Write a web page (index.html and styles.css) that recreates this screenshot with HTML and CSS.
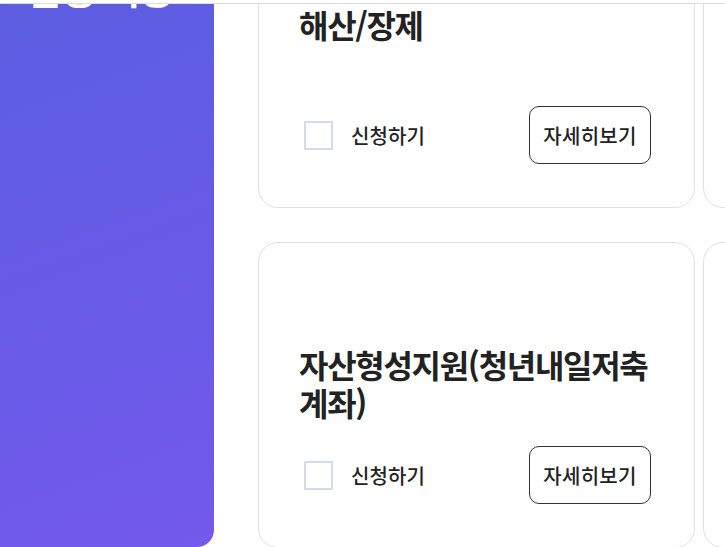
FILE: index.html
```html
<!DOCTYPE html>
<html lang="ko">
<head>
<meta charset="utf-8">
<link rel="stylesheet" href="styles.css">
</head>
<body>
<header class="topbar"></header>
<main class="page">
  <aside class="side">
    <h2 class="side-title">맞춤 복지<br>금융 이용</h2>
  </aside>
  <section class="grid">
    <article class="card">
      <h3 class="card-title">해산/장제</h3>
      <div class="card-foot">
        <label class="apply"><span class="box"></span><span class="apply-text">신청하기</span></label>
        <button class="more">자세히보기</button>
      </div>
    </article>
    <article class="card">
      <h3 class="card-title">주거급여</h3>
      <div class="card-foot">
        <label class="apply"><span class="box"></span><span class="apply-text">신청하기</span></label>
        <button class="more">자세히보기</button>
      </div>
    </article>
    <article class="card">
      <h3 class="card-title">자산형성지원(청년내일저축계좌)</h3>
      <div class="card-foot">
        <label class="apply"><span class="box"></span><span class="apply-text">신청하기</span></label>
        <button class="more">자세히보기</button>
      </div>
    </article>
    <article class="card">
      <h3 class="card-title">교육급여</h3>
      <div class="card-foot">
        <label class="apply"><span class="box"></span><span class="apply-text">신청하기</span></label>
        <button class="more">자세히보기</button>
      </div>
    </article>
  </section>
</main>
</body>
</html>
```
FILE: styles.css
```css
html, body {
  margin: 0;
  padding: 0;
  width: 725px;
  height: 547px;
  overflow: hidden;
  background: #fff;
  font-family: "Noto Sans CJK KR", "Noto Sans", sans-serif;
  color: #222;
}
.topbar {
  position: fixed;
  top: 0;
  left: 0;
  right: 0;
  height: 3px;
  background: #fff;
  border-bottom: 1px solid #dcdcdc;
  z-index: 10;
}
.page {
  display: flex;
  align-items: flex-start;
  gap: 44px;
  margin-top: -98px;
}
.side {
  flex: 0 0 214px;
  width: 214px;
  min-width: 0;
  overflow: hidden;
  height: 645px;
  border-radius: 0 0 17px 0;
  background: linear-gradient(160deg, #595fe0 0%, #6a5ae8 70%, #7359ec 100%);
  padding: 8px 0 0 28px;
  box-sizing: border-box;
}
.side-title {
  margin: 0;
  color: #fff;
  font-size: 38px;
  line-height: 52px;
  font-weight: 700;
  letter-spacing: -1px;
  white-space: nowrap;
}
.grid {
  display: grid;
  grid-template-columns: 437px 437px;
  column-gap: 8px;
  row-gap: 34px;
  flex: 0 0 auto;
}
.card {
  box-sizing: border-box;
  height: 306px;
  border: 1px solid #e0e0e0;
  border-radius: 20px;
  padding: 102px 43px 0 40px;
  display: flex;
  flex-direction: column;
  background: #fff;
}
.card-title {
  margin: 0;
  font-size: 32px;
  line-height: 38px;
  min-height: 76px;
  font-weight: 700;
  letter-spacing: -1.3px;
  color: #222;
  line-break: anywhere;
}
.card-foot {
  margin-top: 25px;
  display: flex;
  align-items: center;
  justify-content: space-between;
}
.apply {
  display: flex;
  align-items: center;
  gap: 18px;
  padding-left: 5px;
}
.box {
  width: 29px;
  height: 29px;
  box-sizing: border-box;
  border: 2px solid #d4d9ec;
  border-radius: 1px;
  background: #fff;
}
.apply-text {
  font-size: 20px;
  font-weight: 500;
  letter-spacing: 0.1px;
  color: #222;
}
.more {
  width: 122px;
  height: 58px;
  box-sizing: border-box;
  border: 1px solid #333;
  border-radius: 10px;
  background: #fff;
  font-family: "Noto Sans CJK KR", "Noto Sans", sans-serif;
  font-size: 20px;
  font-weight: 500;
  letter-spacing: 0.3px;
  color: #222;
  padding: 0;
}
```
